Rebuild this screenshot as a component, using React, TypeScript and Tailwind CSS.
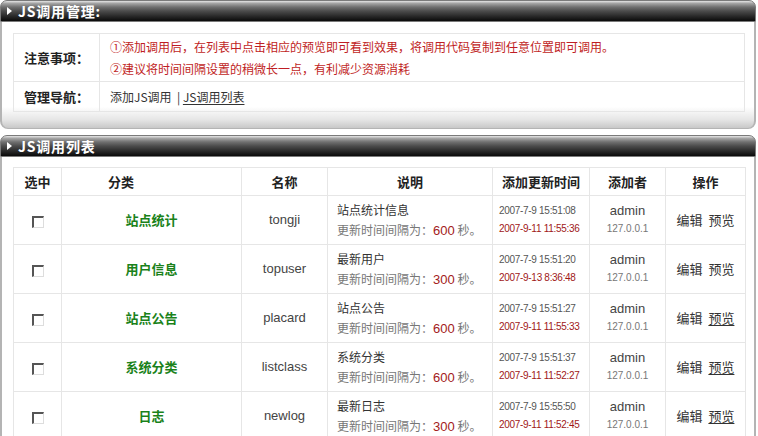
import React from 'react';

type JsItem = {
	id: number;
	category: string;
	name: string;
	title: string;
	interval: number;
	created: string;
	updated: string;
	author: string;
	ip: string;
	previewLink: boolean;
};

const items: JsItem[] = [
	{ id: 1, category: '站点统计', name: 'tongji', title: '站点统计信息', interval: 600, created: '2007-7-9 15:51:08', updated: '2007-9-11 11:55:36', author: 'admin', ip: '127.0.0.1', previewLink: false },
	{ id: 2, category: '用户信息', name: 'topuser', title: '最新用户', interval: 300, created: '2007-7-9 15:51:20', updated: '2007-9-13 8:36:48', author: 'admin', ip: '127.0.0.1', previewLink: false },
	{ id: 3, category: '站点公告', name: 'placard', title: '站点公告', interval: 600, created: '2007-7-9 15:51:27', updated: '2007-9-11 11:55:33', author: 'admin', ip: '127.0.0.1', previewLink: true },
	{ id: 4, category: '系统分类', name: 'listclass', title: '系统分类', interval: 600, created: '2007-7-9 15:51:37', updated: '2007-9-11 11:52:27', author: 'admin', ip: '127.0.0.1', previewLink: true },
	{ id: 5, category: '日志', name: 'newlog', title: '最新日志', interval: 300, created: '2007-7-9 15:55:50', updated: '2007-9-11 11:52:45', author: 'admin', ip: '127.0.0.1', previewLink: true },
];

const cjk = "font-['SimSun','Noto_Sans_CJK_SC',sans-serif]";
const latin = "font-['Liberation_Sans','Noto_Sans_CJK_SC',sans-serif]";

function TitleBar({ title }: { title: string }) {
	return (
		<div className="h-[22px] flex items-center rounded-t-[7px] border border-[#7a7a7a] bg-[linear-gradient(to_bottom,#e6e6e6_0%,#a4a4a4_12%,#707070_30%,#4c4c4c_50%,#2a2a2a_75%,#0a0a0a_100%)]">
			<span className="ml-[6px] mr-[6px] w-0 h-0 border-y-[4px] border-y-transparent border-l-[5px] border-l-white" />
			<span className={`${cjk} text-[14px] font-bold text-white leading-none tracking-[0.8px]`}>{title}</span>
		</div>
	);
}

function PanelBody({ children, open }: { children: React.ReactNode; open?: boolean }) {
	return (
		<div
			className={
				open
					? 'border-x-2 border-[#b4b4b4] bg-white px-[11px] pt-[10px]'
					: 'border-x-2 border-b border-[#b4b4b4] rounded-b-[8px] bg-[linear-gradient(to_bottom,#ffffff_0%,#ffffff_80%,#e6e6e6_92%,#c8c8c8_100%)] px-[11px] pt-[11px] pb-[16px]'
			}
		>
			{children}
		</div>
	);
}

function Checkbox() {
	return (
		<span className="inline-block align-middle w-[12px] h-[12px] border-t-2 border-l-2 border-[#555] border-r border-b border-r-[#ddd] border-b-[#ddd] bg-white" />
	);
}

export default function App() {
	return (
		<div className={`w-[758px] h-[436px] overflow-hidden bg-white text-[12px] text-[#333] ${cjk}`}>
			{/* management notes */}
			<div className="w-[756px]">
				<TitleBar title="JS调用管理:" />
				<PanelBody>
					<table className="w-[732px] border-collapse border border-[#e6e6e6]">
						<tbody>
							<tr className="h-[48px]">
								<td className="w-[86px] pl-[10px] border border-[#e6e6e6] font-bold text-[#222] text-[13px]">注意事项：</td>
								<td className="pl-[10px] border border-[#e6e6e6] text-[#bf1e24] leading-[22px]">
									<div>①添加调用后，在列表中点击相应的预览即可看到效果，将调用代码复制到任意位置即可调用。</div>
									<div>②建议将时间间隔设置的稍微长一点，有利减少资源消耗</div>
								</td>
							</tr>
							<tr className="h-[30px]">
								<td className="pl-[10px] border border-[#e6e6e6] font-bold text-[#222] text-[13px]">管理导航：</td>
								<td className="pl-[10px] border border-[#e6e6e6] text-[#333]">
									添加JS调用 &nbsp;| <span className="underline underline-offset-2">JS调用列表</span>
								</td>
							</tr>
						</tbody>
					</table>
				</PanelBody>
			</div>

			{/* list of js calls */}
			<div className="w-[756px] mt-[6px]">
				<TitleBar title="JS调用列表" />
				<PanelBody open>
					<table className="w-[732px] table-fixed border-collapse border border-[#e6e6e6]">
						<colgroup>
							<col className="w-[48px]" />
							<col className="w-[180px]" />
							<col className="w-[86px]" />
							<col className="w-[165px]" />
							<col className="w-[97px]" />
							<col className="w-[76px]" />
							<col className="w-[80px]" />
						</colgroup>
						<thead>
							<tr className="h-[28px] font-bold text-[13px] text-[#222]">
								<th className="border border-[#e6e6e6] font-bold">选中</th>
								<th className="border border-[#e6e6e6] font-bold text-left pl-[46px]">分类</th>
								<th className="border border-[#e6e6e6] font-bold">名称</th>
								<th className="border border-[#e6e6e6] font-bold">说明</th>
								<th className="border border-[#e6e6e6] font-bold">添加更新时间</th>
								<th className="border border-[#e6e6e6] font-bold">添加者</th>
								<th className="border border-[#e6e6e6] font-bold">操作</th>
							</tr>
						</thead>
						<tbody>
							{items.map((item) => (
								<tr key={item.id} className="h-[49px]">
									<td className="border border-[#e6e6e6] text-center align-middle">
										<Checkbox />
									</td>
									<td className="border border-[#e6e6e6] text-center font-bold text-[13px] text-[#1a821a]">{item.category}</td>
									<td className={`border border-[#e6e6e6] text-center text-[13px] text-[#444] ${latin}`}>{item.name}</td>
									<td className="border border-[#e6e6e6] pl-[9px] leading-[20px]">
										<div className="text-[#333]">{item.title}</div>
										<div className="text-[#777]">
											更新时间间隔为：<span className={`text-[#a32020] text-[13px] ${latin}`}>{item.interval}</span> 秒。
										</div>
									</td>
									<td className={`border border-[#e6e6e6] pl-[6px] text-[10px] leading-[18px] tracking-[-0.3px] ${latin}`}>
										<div className="text-[#555]">{item.created}</div>
										<div className="text-[#a01818]">{item.updated}</div>
									</td>
									<td className={`border border-[#e6e6e6] text-center ${latin}`}>
										<div className="text-[13px] text-[#444] leading-[18px]">{item.author}</div>
										<div className="text-[10px] text-[#777] leading-[18px]">{item.ip}</div>
									</td>
									<td className="border border-[#e6e6e6] text-center text-[13px] text-[#333]">
										编辑 &nbsp;<span className={item.previewLink ? 'underline underline-offset-2' : ''}>预览</span>
									</td>
								</tr>
							))}
						</tbody>
					</table>
				</PanelBody>
			</div>
		</div>
	);
}
